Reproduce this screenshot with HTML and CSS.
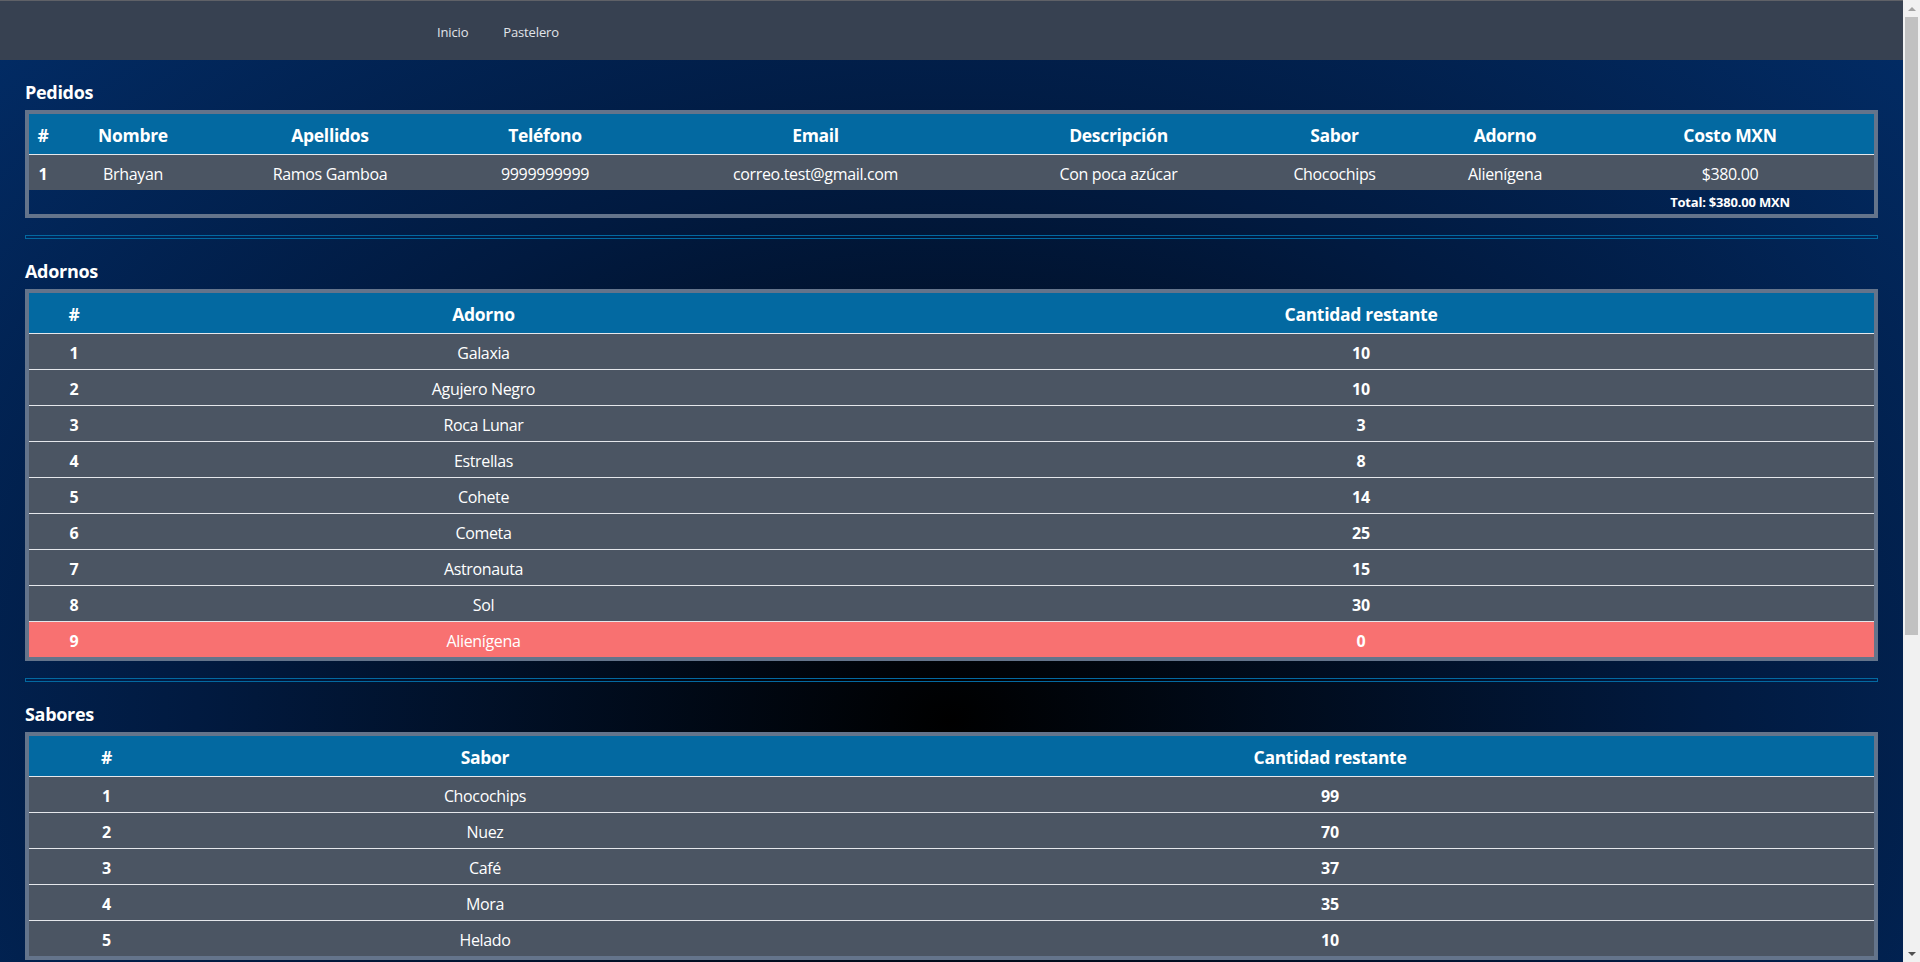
FILE: index.html
```html
<!DOCTYPE html>
<html lang="es">
<head>
<meta charset="utf-8">
<title>Pastelería - Pastelero</title>
<link rel="stylesheet" href="styles.css">
</head>
<body>
<div class="page">
  <header class="navbar">
    <nav class="nav-links">
      <a href="#" class="nav-link">Inicio</a>
      <a href="#" class="nav-link">Pastelero</a>
    </nav>
  </header>
  <main class="content">
    <section class="block">
      <h2 class="block-title">Pedidos</h2>
      <table class="data-table">
        <colgroup>
          <col class="w28"><col class="w152"><col class="w242"><col class="w188"><col class="w353"><col class="w253"><col class="w179"><col class="w162"><col class="w288">
        </colgroup>
        <thead>
          <tr><th>#</th><th>Nombre</th><th>Apellidos</th><th>Teléfono</th><th>Email</th><th>Descripción</th><th>Sabor</th><th>Adorno</th><th>Costo MXN</th></tr>
        </thead>
        <tbody>
          <tr><td class="num">1</td><td>Brhayan</td><td>Ramos Gamboa</td><td>9999999999</td><td>correo.test@gmail.com</td><td>Con poca azúcar</td><td>Chocochips</td><td>Alienígena</td><td>$380.00</td></tr>
        </tbody>
        <tfoot>
          <tr><td colspan="8"></td><td class="total">Total: $380.00 MXN</td></tr>
        </tfoot>
      </table>
    </section>
    <hr class="divider">
    <section class="block">
      <h2 class="block-title">Adornos</h2>
      <table class="data-table">
        <colgroup><col class="w90"><col class="w729"><col class="w1026"></colgroup>
        <thead><tr><th>#</th><th>Adorno</th><th>Cantidad restante</th></tr></thead>
        <tbody>
          <tr><td class="num">1</td><td>Galaxia</td><td class="num">10</td></tr>
          <tr><td class="num">2</td><td>Agujero Negro</td><td class="num">10</td></tr>
          <tr><td class="num">3</td><td>Roca Lunar</td><td class="num">3</td></tr>
          <tr><td class="num">4</td><td>Estrellas</td><td class="num">8</td></tr>
          <tr><td class="num">5</td><td>Cohete</td><td class="num">14</td></tr>
          <tr><td class="num">6</td><td>Cometa</td><td class="num">25</td></tr>
          <tr><td class="num">7</td><td>Astronauta</td><td class="num">15</td></tr>
          <tr><td class="num">8</td><td>Sol</td><td class="num">30</td></tr>
          <tr class="empty"><td class="num">9</td><td>Alienígena</td><td class="num">0</td></tr>
        </tbody>
      </table>
    </section>
    <hr class="divider">
    <section class="block">
      <h2 class="block-title">Sabores</h2>
      <table class="data-table">
        <colgroup><col class="w155"><col class="w602"><col class="w1088"></colgroup>
        <thead><tr><th>#</th><th>Sabor</th><th>Cantidad restante</th></tr></thead>
        <tbody>
          <tr><td class="num">1</td><td>Chocochips</td><td class="num">99</td></tr>
          <tr><td class="num">2</td><td>Nuez</td><td class="num">70</td></tr>
          <tr><td class="num">3</td><td>Café</td><td class="num">37</td></tr>
          <tr><td class="num">4</td><td>Mora</td><td class="num">35</td></tr>
          <tr><td class="num">5</td><td>Helado</td><td class="num">10</td></tr>
        </tbody>
      </table>
    </section>
  </main>
</div>
<div class="scrollbar" aria-hidden="true">
  <div class="scroll-btn"><span class="arrow-up"></span></div>
  <div class="scroll-track"><div class="scroll-thumb"></div></div>
  <div class="scroll-btn"><span class="arrow-down"></span></div>
</div>
</body>
</html>
```

FILE: styles.css
```css
html {
  min-height: 100%;
  background: radial-gradient(ellipse at 49.5% 50%, #000000 0%, #011a40 55%, #022d68 100%);
}

body {
  margin: 0;
  min-height: 1440px;
  font-family: "Open Sans", "Noto Sans", "Liberation Sans", sans-serif;
  color: #ffffff;
  overflow: hidden;
}

.page {
  margin-right: 17px;
}

.navbar {
  height: 60px;
  box-sizing: border-box;
  border-top: 1px solid #5f6167;
  background: #374151;
  display: flex;
  align-items: center;
}

.nav-links {
  display: flex;
  gap: 35px;
  padding-left: 437px;
  padding-top: 3px;
}

.nav-link {
  color: #e1e4e9;
  text-decoration: none;
  font-size: 13px;
  letter-spacing: -0.15px;
}

.content {
  padding: 0 25px;
}

.block-title {
  margin: 17px 0 6px;
  padding-top: 3px;
  font-size: 18px;
  line-height: 24px;
  font-weight: 700;
  letter-spacing: -0.3px;
}

.divider {
  margin: 17px 0 0;
  height: 2px;
  border: 1px solid #0369a1;
  background: transparent;
  box-sizing: content-box;
}

.data-table {
  width: 100%;
  table-layout: fixed;
  border-collapse: separate;
  border-spacing: 0;
  border: 4px solid #64748b;
}

.data-table th {
  background: #0369a1;
  font-size: 17.5px;
  font-weight: 700;
  line-height: 24px;
  padding: 9px 2px 7px;
  border-bottom: 1px solid #e5e7eb;
  text-align: center;
  white-space: nowrap;
  letter-spacing: -0.3px;
}

.data-table td {
  background: #4b5563;
  font-size: 16px;
  line-height: 23px;
  padding: 8px 2px 4px;
  border-bottom: 1px solid #e5e7eb;
  text-align: center;
  white-space: nowrap;
  letter-spacing: -0.35px;
}

.data-table tbody tr:last-child td {
  border-bottom: none;
}

.data-table td.num {
  font-weight: 700;
  font-size: 16px;
  letter-spacing: -0.2px;
}

.data-table tr.empty td {
  background: #f87171;
}

.data-table tfoot td {
  background: transparent;
  border-bottom: none;
  padding: 1px 2px 0;
  line-height: 23px;
}

.data-table tfoot td.total {
  font-size: 13px;
  font-weight: 700;
  letter-spacing: -0.2px;
}

.w28 { width: 28px; }
.w152 { width: 152px; }
.w242 { width: 242px; }
.w188 { width: 188px; }
.w353 { width: 353px; }
.w253 { width: 253px; }
.w179 { width: 179px; }
.w162 { width: 162px; }
.w288 { width: 288px; }
.w90 { width: 90px; }
.w729 { width: 729px; }
.w1026 { width: 1026px; }
.w155 { width: 155px; }
.w602 { width: 602px; }
.w1088 { width: 1088px; }

/* emulated classic scrollbar */
.scrollbar {
  position: fixed;
  top: 0;
  right: 0;
  width: 17px;
  height: 100vh;
  background: #f1f1f1;
  display: flex;
  flex-direction: column;
}

.scroll-btn {
  height: 17px;
  flex: none;
  display: flex;
  align-items: center;
  justify-content: center;
}

.arrow-up {
  width: 0;
  height: 0;
  border-left: 4px solid transparent;
  border-right: 4px solid transparent;
  border-bottom: 4px solid #a3a3a3;
}

.arrow-down {
  width: 0;
  height: 0;
  border-left: 4px solid transparent;
  border-right: 4px solid transparent;
  border-top: 4px solid #505050;
}

.scroll-track {
  flex: 1;
  padding: 0 2px;
}

.scroll-thumb {
  height: 618px;
  background: #c1c1c1;
}
```
